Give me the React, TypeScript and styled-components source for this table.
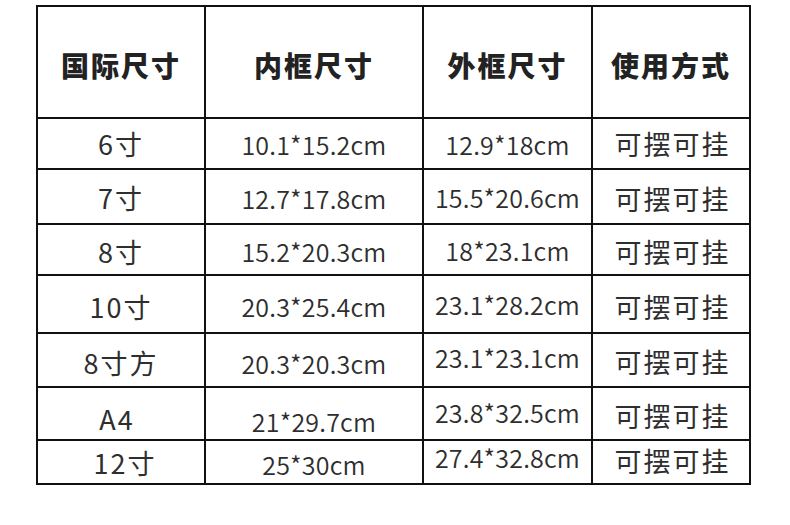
import * as React from 'react'
import styled, { createGlobalStyle } from 'styled-components'

const Global = createGlobalStyle`
  html, body {
    margin: 0;
    padding: 0;
    background: #fff;
  }
  body {
    font-family: "Noto Sans CJK SC", "Noto Sans", sans-serif;
    color: #2a2a2a;
  }
`

const Page = styled.div`
  width: 790px;
  height: 525px;
  padding: 5px 0 0 36px;
  box-sizing: border-box;
`

const Table = styled.div`
  display: grid;
  grid-template-columns: 168px 218px 169px 158px;
  grid-template-rows: 112px 51px 55px 51px 58px 54px 53px 44px;
  width: max-content;
  border-left: 2px solid #111;
  border-top: 2px solid #111;
`

type Kind = 'head' | 'cjk' | 'num'

// $dy / $dx nudge the text, the source image is not perfectly even
const Cell = styled.div<{ $kind: Kind; $dy?: number; $dx?: number }>`
  box-sizing: border-box;
  border-right: 2px solid #111;
  border-bottom: 2px solid #111;
  display: flex;
  align-items: center;
  justify-content: center;
  white-space: nowrap;
  font-family: "Noto Sans CJK SC", sans-serif;
  font-size: ${p => (p.$kind === 'head' ? 28 : p.$kind === 'cjk' ? 27 : 25)}px;
  font-weight: ${p => (p.$kind === 'head' ? 900 : p.$kind === 'num' ? 350 : 400)};
  letter-spacing: ${p => (p.$kind === 'num' ? 0.2 : 2)}px;
  color: ${p => (p.$kind === 'head' ? '#222' : '#2e2e2e')};
  padding-top: ${p => Math.max(0, 2 * (p.$dy ?? 0)) + (p.$kind === 'head' ? 6 : 0)}px;
  padding-bottom: ${p => Math.max(0, -2 * (p.$dy ?? 0))}px;
  padding-left: ${p => Math.max(0, 2 * (p.$dx ?? 0))}px;
  padding-right: ${p => Math.max(0, -2 * (p.$dx ?? 0))}px;
`

const header = ['国际尺寸', '内框尺寸', '外框尺寸', '使用方式']

const rows = [
  { size: '6寸', inner: '10.1*15.2cm', outer: '12.9*18cm', dy: [0, 0, 0, 0], dx: 0 },
  { size: '7寸', inner: '12.7*17.8cm', outer: '15.5*20.6cm', dy: [1, 1.5, 0, 2], dx: 0 },
  { size: '8寸', inner: '15.2*20.3cm', outer: '18*23.1cm', dy: [1.5, 1.5, 0, 2], dx: 0 },
  { size: '10寸', inner: '20.3*25.4cm', outer: '23.1*28.2cm', dy: [2, 2, -0.5, 2], dx: 0 },
  { size: '8寸方', inner: '20.3*20.3cm', outer: '23.1*23.1cm', dy: [2, 3, -3, 1], dx: 0 },
  { size: 'A4', inner: '21*29.7cm', outer: '23.8*32.5cm', dy: [5, 7, -1.5, 1.5], dx: -4 },
  { size: '12寸', inner: '25*30cm', outer: '27.4*32.8cm', dy: [0, 1.5, -5, -2], dx: 4 },
]

export default function App() {
  return (
    <Page>
      <Global />
      <Table>
        {header.map(h => <Cell key={h} $kind="head">{h}</Cell>)}
        {rows.map(r => (
          <React.Fragment key={r.size}>
            <Cell $kind="cjk" $dy={r.dy[0]} $dx={r.dx}>{r.size}</Cell>
            <Cell $kind="num" $dy={r.dy[1]}>{r.inner}</Cell>
            <Cell $kind="num" $dy={r.dy[2]}>{r.outer}</Cell>
            <Cell $kind="cjk" $dy={r.dy[3]} $dx={1.5}>可摆可挂</Cell>
          </React.Fragment>
        ))}
      </Table>
    </Page>
  )
}
